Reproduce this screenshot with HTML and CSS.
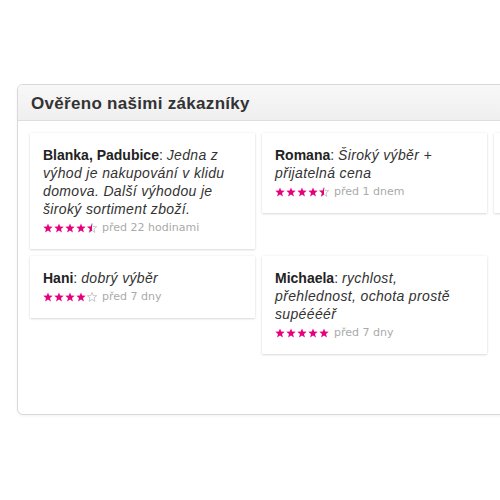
FILE: index.html
```html
<!DOCTYPE html>
<html lang="cs">
<head>
<meta charset="utf-8">
<title>Ověřeno našimi zákazníky</title>
<link rel="stylesheet" href="styles.css">
</head>
<body>
<svg width="0" height="0" class="defs">
  <defs>
    <path id="star" d="M5 0.4 L6.2 3.6 L9.7 3.7 L7 5.9 L7.9 9.4 L5 7.4 L2.1 9.4 L3 5.9 L0.3 3.7 L3.8 3.6 Z"/>
    <clipPath id="half"><rect x="0" y="0" width="5" height="10"/></clipPath>
  </defs>
</svg>
<section class="panel">
  <header class="panel-head">Ověřeno našimi zákazníky</header>
  <div class="grid">
    <article class="card c1">
      <p class="text"><b>Blanka, Padubice</b>: <i>Jedna z výhod je nakupování v klidu domova. Další výhodou je široký sortiment zboží.</i></p>
      <div class="meta">
        <span class="stars">
          <svg viewBox="0 0 10 10"><use href="#star"/></svg><svg viewBox="0 0 10 10"><use href="#star"/></svg><svg viewBox="0 0 10 10"><use href="#star"/></svg><svg viewBox="0 0 10 10"><use href="#star"/></svg><svg viewBox="0 0 10 10" class="half"><use href="#star" class="outline"/><use href="#star" clip-path="url(#half)"/></svg>
        </span>
        <span class="when">před 22 hodinami</span>
      </div>
    </article>
    <article class="card c2">
      <p class="text"><b>Romana</b>: <i>Široký výběr + přijatelná cena</i></p>
      <div class="meta">
        <span class="stars">
          <svg viewBox="0 0 10 10"><use href="#star"/></svg><svg viewBox="0 0 10 10"><use href="#star"/></svg><svg viewBox="0 0 10 10"><use href="#star"/></svg><svg viewBox="0 0 10 10"><use href="#star"/></svg><svg viewBox="0 0 10 10" class="half"><use href="#star" class="outline"/><use href="#star" clip-path="url(#half)"/></svg>
        </span>
        <span class="when">před 1 dnem</span>
      </div>
    </article>
    <article class="card c5"></article>
    <article class="card c3">
      <p class="text"><b>Hani</b>: <i>dobrý výběr</i></p>
      <div class="meta">
        <span class="stars">
          <svg viewBox="0 0 10 10"><use href="#star"/></svg><svg viewBox="0 0 10 10"><use href="#star"/></svg><svg viewBox="0 0 10 10"><use href="#star"/></svg><svg viewBox="0 0 10 10"><use href="#star"/></svg><svg viewBox="0 0 10 10"><use href="#star" class="outline"/></svg>
        </span>
        <span class="when">před 7 dny</span>
      </div>
    </article>
    <article class="card c4">
      <p class="text"><b>Michaela</b>: <i>rychlost, přehlednost, ochota prostě supééééř</i></p>
      <div class="meta">
        <span class="stars">
          <svg viewBox="0 0 10 10"><use href="#star"/></svg><svg viewBox="0 0 10 10"><use href="#star"/></svg><svg viewBox="0 0 10 10"><use href="#star"/></svg><svg viewBox="0 0 10 10"><use href="#star"/></svg><svg viewBox="0 0 10 10"><use href="#star"/></svg>
        </span>
        <span class="when">před 7 dny</span>
      </div>
    </article>
  </div>
</section>
</body>
</html>
```
FILE: styles.css
```css
html, body {
  margin: 0;
  padding: 0;
  background: #fff;
  overflow: hidden;
  width: 500px;
  height: 500px;
}
.defs { position: absolute; width: 0; height: 0; }
.panel {
  margin: 84px 0 0 17px;
  width: 520px;
  height: 329px;
  border: 1px solid #d9d9d9;
  border-radius: 6px;
  box-shadow: 0 1px 3px rgba(0,0,0,0.06);
  font-family: "Liberation Sans", Arial, sans-serif;
  overflow: hidden;
  background: #fff;
}
.panel-head {
  height: 35px;
  line-height: 37px;
  padding-left: 13px;
  background: linear-gradient(#f8f8f8, #efefef);
  border-bottom: 1px solid #dedede;
  font-size: 17px;
  letter-spacing: 0.3px;
  font-weight: bold;
  color: #333;
}
.grid {
  display: grid;
  grid-template-columns: 225px 225px 225px;
  column-gap: 7px;
  row-gap: 7px;
  padding: 12px 0 0 12px;
  align-items: start;
}
.card {
  background: #fff;
  padding: 13px 13px 14px 13px;
  box-shadow: 0 1px 2px rgba(0,0,0,0.13), 0 0 3px rgba(0,0,0,0.06);
}
.c1 { grid-column: 1; grid-row: 1; }
.c2 { grid-column: 2; grid-row: 1; }
.c5 { grid-column: 3; grid-row: 1; height: 53px; }
.c3 { grid-column: 1; grid-row: 2; }
.c4 { grid-column: 2; grid-row: 2; }
.text {
  margin: 0;
  font-size: 14px;
  line-height: 18px;
  color: #333;
}
.text b { color: #222; }
.text i { color: #333; letter-spacing: 0.35px; }
.meta {
  display: flex;
  align-items: center;
  gap: 5px;
  margin-top: 2px;
  height: 15px;
}
.stars {
  display: flex;
  gap: 1px;
}
.stars svg {
  width: 10px;
  height: 10px;
  fill: #e6007e;
}
.stars .outline {
  fill: none;
  stroke: #bbb;
  stroke-width: 0.8;
}
.when {
  font-family: "DejaVu Sans", Verdana, sans-serif;
  font-size: 11px;
  color: #aaa;
}
```
